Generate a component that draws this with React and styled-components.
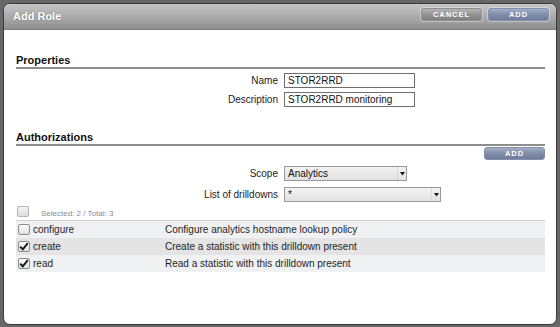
import React from "react";
import styled, { createGlobalStyle } from "styled-components";

const GlobalStyle = createGlobalStyle`
  html, body { margin: 0; padding: 0; }
  body {
    background: #666;
    font-family: "Liberation Sans", Arial, sans-serif;
    color: #1e1e1e;
    width: 560px;
    height: 327px;
    overflow: hidden;
  }
`;

const Dialog = styled.div`
  margin: 3px 0 0 3px;
  width: 554px;
  height: 322px;
  box-sizing: border-box;
  border: 1px solid #3a3a3a;
  border-radius: 7px;
  background: #fff;
  overflow: hidden;
  display: flex;
  flex-direction: column;
`;

const Header = styled.div`
  height: 25px;
  flex: none;
  display: flex;
  align-items: flex-start;
  justify-content: space-between;
  padding: 0 7px 0 9px;
  background: linear-gradient(#c6c6c6, #a9a9a9 55%, #8e8e8e);
  border-bottom: 1px solid #7c7c7c;
`;

const Title = styled.div`
  color: #fff;
  font-weight: bold;
  font-size: 11px;
  line-height: 13px;
  margin-top: 6px;
  text-shadow: 0 0 2px rgba(0, 0, 0, 0.35);
`;

const ButtonGroup = styled.div`
  display: flex;
  gap: 6px;
  margin-top: 4px;
`;

const Button = styled.button`
  width: 61px;
  height: 13px;
  padding: 0;
  border-radius: 3px;
  border: 1px solid ${(p) => (p.$primary ? "#8190ac" : "#8d8d8d")};
  background: ${(p) =>
    p.$primary
      ? "linear-gradient(#a3afc6, #7f8daa 50%, #6f7d9a)"
      : "linear-gradient(#b5b5b5, #939393 50%, #7f7f7f)"};
  box-shadow: 0 0 0 1px rgba(255, 255, 255, 0.35);
  color: #fff;
  font-family: "Liberation Sans", Arial, sans-serif;
  font-weight: bold;
  font-size: 7.5px;
  letter-spacing: 1px;
  line-height: 11px;
  text-align: center;
  cursor: pointer;
`;

const Body = styled.div`
  width: 529px;
  padding: 24px 0 0 12px;
  display: flex;
  flex-direction: column;
`;

const SectionTitle = styled.div`
  font-size: 11px;
  line-height: 13px;
  font-weight: bold;
  color: #111;
  border-bottom: 2px solid #8e8e8e;
  margin-top: ${(p) => p.$top || 0}px;
`;

const Form = styled.div`
  display: grid;
  grid-template-columns: 262px auto;
  column-gap: 6px;
  row-gap: ${(p) => p.$gap}px;
  margin-top: ${(p) => p.$top}px;
  align-items: center;
  justify-items: start;
`;

const Label = styled.div`
  justify-self: end;
  font-size: 10px;
  color: #222;
`;

const Input = styled.div`
  width: ${(p) => p.$w}px;
  height: 15px;
  box-sizing: border-box;
  border: 1px solid #6e6e6e;
  background: #fff;
  font-size: 10px;
  line-height: 13px;
  padding-left: 3px;
  color: #111;
`;

const Select = styled.div`
  width: ${(p) => p.$w}px;
  height: 15px;
  box-sizing: border-box;
  border: 1px solid #9a9a9a;
  background: linear-gradient(#f2f2f2, #e2e2e2);
  font-size: 10px;
  line-height: 13px;
  padding-left: 3px;
  color: #111;
  display: flex;
  justify-content: space-between;
  align-items: center;
`;

const Arrow = styled.div`
  width: 8px;
  height: 13px;
  border-left: 1px solid #d8d8d8;
  display: flex;
  align-items: center;
  justify-content: center;
`;

const ToolRow = styled.div`
  display: flex;
  justify-content: flex-end;
  margin-top: 1px;
`;

const Table = styled.div`
  width: 100%;
  display: flex;
  flex-direction: column;
`;

const ListHeader = styled.div`
  display: flex;
  align-items: flex-start;
  gap: 12px;
  height: 19px;
  box-sizing: border-box;
  padding: 4px 0 0 1px;
  border-bottom: 1px solid #cfcfcf;
`;

const Summary = styled.div`
  font-size: 8px;
  line-height: 10px;
  color: #8a8a8a;
  margin-top: 3px;
`;

const Row = styled.div`
  width: 100%;
  display: grid;
  grid-template-columns: 149px 1fr;
  align-items: center;
  height: 17px;
  background: ${(p) => (p.$dark ? "#e4e4e5" : "#f0f1f3")};
  font-size: 10px;
  color: #1e1e1e;
`;

const NameCell = styled.div`
  display: flex;
  align-items: center;
  gap: 3px;
  padding-left: 2px;
`;

const Box = styled.div`
  width: 12px;
  height: 11px;
  box-sizing: border-box;
  border: 1px solid ${(p) => (p.$muted ? "#b4b4b4" : "#8c8c8c")};
  border-radius: 2px;
  background: ${(p) =>
    p.$muted ? "linear-gradient(#f4f4f4, #dedede)" : "linear-gradient(#ffffff, #e0e0e0)"};
  display: flex;
  align-items: center;
  justify-content: center;
`;

const Check = ({ checked, muted }) => (
  <Box $muted={muted}>
    {checked && (
      <svg width="10" height="9" viewBox="0 0 10 9">
        <path d="M1.2 4.6 L3.8 7.4 L8.8 1.2" fill="none" stroke="#111" strokeWidth="1.9" />
      </svg>
    )}
  </Box>
);

const DropArrow = () => (
  <Arrow>
    <svg width="5" height="4" viewBox="0 0 5 4">
      <path d="M0 0 H5 L2.5 3.5 Z" fill="#111" />
    </svg>
  </Arrow>
);

const rows = [
  { name: "configure", desc: "Configure analytics hostname lookup policy", checked: false },
  { name: "create", desc: "Create a statistic with this drilldown present", checked: true },
  { name: "read", desc: "Read a statistic with this drilldown present", checked: true },
];

export default function App() {
  return (
    <>
      <GlobalStyle />
      <Dialog>
        <Header>
          <Title>Add Role</Title>
          <ButtonGroup>
            <Button>CANCEL</Button>
            <Button $primary>ADD</Button>
          </ButtonGroup>
        </Header>
        <Body>
          <SectionTitle>Properties</SectionTitle>
          <Form $top={4} $gap={4}>
            <Label>Name</Label>
            <Input $w={131}>STOR2RRD</Input>
            <Label>Description</Label>
            <Input $w={131}>STOR2RRD monitoring</Input>
          </Form>
          <SectionTitle $top={24}>Authorizations</SectionTitle>
          <ToolRow>
            <Button $primary>ADD</Button>
          </ToolRow>
          <Form $top={6} $gap={6}>
            <Label>Scope</Label>
            <Select $w={123}>
              Analytics
              <DropArrow />
            </Select>
            <Label>List of drilldowns</Label>
            <Select $w={157}>
              *
              <DropArrow />
            </Select>
          </Form>
          <Table>
            <ListHeader>
              <Check muted />
              <Summary>Selected: 2 / Total: 3</Summary>
            </ListHeader>
            {rows.map((r, i) => (
              <Row key={r.name} $dark={i === 1}>
                <NameCell>
                  <Check checked={r.checked} />
                  {r.name}
                </NameCell>
                <div>{r.desc}</div>
              </Row>
            ))}
          </Table>
        </Body>
      </Dialog>
    </>
  );
}
